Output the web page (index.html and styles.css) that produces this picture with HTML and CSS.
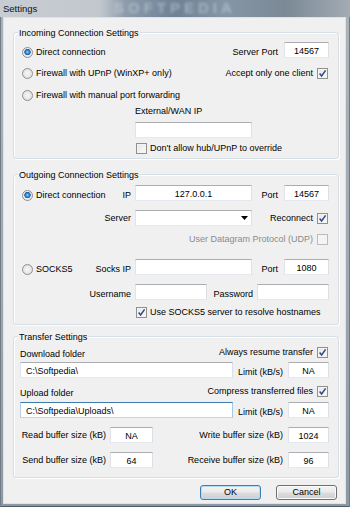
FILE: index.html
```html
<!DOCTYPE html>
<html>
<head>
<meta charset="utf-8">
<title>Settings</title>
<link rel="stylesheet" href="styles.css">
</head>
<body>
<div class="window">
  <div class="titlebar">
    <span class="title">Settings</span>
    <span class="watermark">SOFTPEDIA</span>
  </div>
  <div class="client">

    <section class="group g1">
      <span class="legend">Incoming Connection Settings</span>
      <div class="row h16 bottom">
        <span class="opt"><span class="rb on"></span>Direct connection</span>
        <span class="grow"></span>
        <span class="lbl">Server Port</span>
        <span class="in port">14567</span>
      </div>
      <div class="row h16 mt7">
        <span class="opt"><span class="rb"></span>Firewall with UPnP (WinXP+ only)</span>
        <span class="grow"></span>
        <span class="chk">Accept only one client<span class="cb"><svg width="9" height="9" viewBox="0 0 9 9"><path d="M1.6 4.6 L3.6 7 L7.6 1.4" fill="none" stroke="#33467f" stroke-width="1.5"/></svg></span></span>
      </div>
      <div class="row h16 mt6">
        <span class="opt"><span class="rb"></span>Firewall with manual port forwarding</span>
      </div>
      <div class="row h12 mt2 indent">External/WAN IP</div>
      <div class="row h16 mt5 indent"><span class="in wide"></span></div>
      <div class="row h11 mt5 indent">
        <span class="chk left"><span class="cb off"></span>Don't allow hub/UPnP to override</span>
      </div>
    </section>

    <section class="group g2">
      <span class="legend">Outgoing Connection Settings</span>
      <div class="grow4 h16 bottom">
        <span class="c1"><span class="opt"><span class="rb on"></span>Direct connection</span><span>IP</span></span>
        <span class="in">127.0.0.1</span>
        <span class="lbl r">Port</span>
        <span class="in">14567</span>
      </div>
      <div class="grow4 h16 mt9 mid">
        <span class="c1 end">Server</span>
        <span class="in select"><svg width="7" height="4" viewBox="0 0 7 4"><path d="M0 0 H7 L3.5 4 Z" fill="#000"/></svg></span>
        <span class="span34 chk">Reconnect<span class="cb"><svg width="9" height="9" viewBox="0 0 9 9"><path d="M1.6 4.6 L3.6 7 L7.6 1.4" fill="none" stroke="#33467f" stroke-width="1.5"/></svg></span></span>
      </div>
      <div class="grow4 h11 mt8">
        <span class="spanall chk disabled">User Datagram Protocol (UDP)<span class="cb dis"></span></span>
      </div>
      <div class="grow4 h16 mt14 bottom">
        <span class="c1"><span class="opt"><span class="rb"></span>SOCKS5</span><span>Socks IP</span></span>
        <span class="in"></span>
        <span class="lbl r">Port</span>
        <span class="in">1080</span>
      </div>
      <div class="grow4 h16 mt9 bottom">
        <span class="c1 end">Username</span>
        <span class="span24 userrow">
          <span class="in half"></span>
          <span class="grow"></span>
          <span class="lbl">Password</span>
          <span class="in half"></span>
        </span>
      </div>
      <div class="grow4 h11 mt7">
        <span class="span24 chk left"><span class="cb"><svg width="9" height="9" viewBox="0 0 9 9"><path d="M1.6 4.6 L3.6 7 L7.6 1.4" fill="none" stroke="#33467f" stroke-width="1.5"/></svg></span>Use SOCKS5 server to resolve hostnames</span>
      </div>
    </section>

    <section class="group g3">
      <span class="legend">Transfer Settings</span>
      <div class="row h13 split">
        <span class="flabel">Download folder</span>
        <span class="chk top">Always resume transfer<span class="cb"><svg width="9" height="9" viewBox="0 0 9 9"><path d="M1.6 4.6 L3.6 7 L7.6 1.4" fill="none" stroke="#33467f" stroke-width="1.5"/></svg></span></span>
      </div>
      <div class="row h16 mt2 bottom">
        <span class="in path">C:\Softpedia\</span>
        <span class="grow"></span>
        <span class="lbl">Limit (kB/s)</span>
        <span class="in na">NA</span>
      </div>
      <div class="row h13 mt8 split">
        <span class="flabel">Upload folder</span>
        <span class="chk top">Compress transferred files<span class="cb"><svg width="9" height="9" viewBox="0 0 9 9"><path d="M1.6 4.6 L3.6 7 L7.6 1.4" fill="none" stroke="#33467f" stroke-width="1.5"/></svg></span></span>
      </div>
      <div class="row h16 mt3 bottom">
        <span class="in path focus">C:\Softpedia\Uploads\</span>
        <span class="grow"></span>
        <span class="lbl">Limit (kB/s)</span>
        <span class="in na">NA</span>
      </div>
      <div class="row h16 mt9 mid">
        <span class="blabel">Read buffer size (kB)</span>
        <span class="in buf">NA</span>
        <span class="grow"></span>
        <span class="lbl">Write buffer size (kB)</span>
        <span class="in na">1024</span>
      </div>
      <div class="row h16 mt9 mid">
        <span class="blabel">Send buffer size (kB)</span>
        <span class="in buf">64</span>
        <span class="grow"></span>
        <span class="lbl">Receive buffer size (kB)</span>
        <span class="in na">96</span>
      </div>
    </section>

    <div class="buttons">
      <span class="btn default">OK</span>
      <span class="btn">Cancel</span>
    </div>
  </div>
</div>
</body>
</html>
```

FILE: styles.css
```css
* { box-sizing: border-box; }
html, body { margin: 0; padding: 0; }
body {
  font-family: "Liberation Sans", Arial, sans-serif;
  font-size: 9px;
  color: #000;
  background: #8a96a1;
}

.window {
  width: 350px;
  height: 507px;
  display: flex;
  flex-direction: column;
  background: linear-gradient(180deg, #a9b3bc 0, #9ca7b1 60%, #8c98a3 100%);
  box-shadow: inset 1px 0 0 #6f7d89, inset -1px 0 0 #6f7d89, inset 0 -1px 0 #4f5b66;
  overflow: hidden;
}

.titlebar {
  position: relative;
  flex: none;
  height: 17px;
  display: flex;
  align-items: center;
  padding-left: 3px;
  background: linear-gradient(90deg, #c7cdd3 0, #c1c7cd 100px, #8d9cab 125px, #6e8195 175px, #8596a6 225px, #7b8996 285px, #a3abb3 350px);
  overflow: hidden;
}
.title {
  position: relative;
  z-index: 1;
  font-size: 9.5px;
  color: #111;
}
.watermark {
  position: absolute;
  left: 114px;
  top: 0;
  font-size: 15px;
  line-height: 16px;
  font-weight: bold;
  letter-spacing: 4px;
  color: rgba(215, 224, 233, 0.45);
  filter: blur(1.4px);
}

.client {
  flex: 1;
  margin: 0 4px 3px 3px;
  border: 1px solid #dde2e6;
  background: #f0f0f0;
  padding: 14px 0 0 9px;
}

.group {
  position: relative;
  width: 326px;
  border: 1px solid #d5dfe5;
  border-radius: 3px;
  box-shadow: inset 1px 1px 0 #fff, 1px 1px 0 #fff;
  padding: 0 9px 0 6px;
}
.legend {
  position: absolute;
  top: -5px;
  left: 4px;
  padding: 0 1px;
  line-height: 11px;
  background: #f0f0f0;
}
.g1 { padding-top: 9px; padding-bottom: 4px; }
.g2 { margin-top: 15px; padding-top: 10px; padding-bottom: 6px; }
.g3 { margin-top: 11px; padding-top: 10px; padding-bottom: 9px; }

.row { display: flex; align-items: center; }
.grow4 {
  display: grid;
  grid-template-columns: 111px 117px 24px 45px;
  column-gap: 4px;
  align-items: center;
}
.bottom { align-items: end; }
.row.bottom { align-items: flex-end; }
.mid { align-items: center; }

.h11 { height: 11px; }
.h12 { height: 12px; }
.h13 { height: 13px; }
.h16 { height: 16px; }
.mt2 { margin-top: 2px; }
.mt3 { margin-top: 3px; }
.mt5 { margin-top: 5px; }
.mt6 { margin-top: 6px; }
.mt7 { margin-top: 7px; }
.mt8 { margin-top: 8px; }
.mt9 { margin-top: 9px; }
.mt14 { margin-top: 14px; }
.indent { padding-left: 115px; }
.grow { flex: 1; }

.lbl { line-height: 11px; margin-right: 5px; }
.lbl.r { text-align: right; margin-right: 2px; }
.g1 .lbl { margin-right: 6px; }

.c1 { display: flex; justify-content: space-between; align-items: flex-end; line-height: 11px; }
.c1.end { justify-content: flex-end; }
.span34 { grid-column: 3 / 5; }
.span24 { grid-column: 2 / 5; }
.spanall { grid-column: 1 / 5; }
.userrow { display: flex; align-items: flex-end; height: 16px; }
.userrow .lbl { margin-right: 4px; }

.opt { display: flex; align-items: center; line-height: 11px; }
.rb {
  width: 11px;
  height: 11px;
  margin: 0 3px 0 2px;
  border-radius: 50%;
  border: 1px solid #8d8f91;
  background: radial-gradient(circle at 50% 50%, #f7f7f7 0, #e6e6e6 60%, #d2d4d6 100%);
}
.rb.on {
  background: radial-gradient(circle at 50% 45%, #a6dcf8 0, #3a94dc 1.4px, #1c5e9e 2.9px, #eef0f2 3.5px, #dcdee0 100%);
}

.chk { display: flex; align-items: center; justify-content: flex-end; line-height: 11px; }
.chk.left { justify-content: flex-start; }
.chk.left .cb { margin: 0 3px 0 1px; }
.chk.top { align-self: flex-start; }
.chk.disabled { color: #8b8b8b; }
.cb {
  width: 11px;
  height: 11px;
  margin: 0 1px 0 4px;
  border: 1px solid #8f9092;
  background: linear-gradient(135deg, #e4e6ea 0, #fbfbfb 100%);
  box-shadow: inset 0 0 0 1px #f4f4f4;
  display: flex;
  align-items: center;
  justify-content: center;
}
.cb.dis { border-color: #bcbcbc; background: #f4f4f4; }

.in {
  height: 16px;
  background: #fff;
  border: 1px solid;
  border-color: #abadb3 #dbdfe6 #e3e9ef #e2e3ea;
  line-height: 14px;
  padding-top: 1px;
  text-align: center;
  white-space: nowrap;
}
.port { width: 45px; }
.wide { width: 117px; }
.half { width: 72px; }
.path { width: 213px; text-align: left; padding-left: 5px; }
.na { width: 41px; }
.buf { width: 43px; }
.focus { border-color: #3d7bad #a4c9e3 #b7d9ed #b5cfe7; }
.select {
  display: flex;
  justify-content: flex-end;
  align-items: center;
  padding: 0 3px 0 0;
}

.split { justify-content: space-between; align-items: flex-end; }
.flabel { line-height: 11px; }
.blabel { width: 86px; text-align: right; margin-right: 4px; line-height: 11px; }

.buttons {
  width: 326px;
  display: flex;
  justify-content: flex-end;
  gap: 15px;
  padding-right: 2px;
  margin-top: 7px;
}
.btn {
  width: 61px;
  height: 15px;
  border: 1px solid #707070;
  border-radius: 3px;
  background: linear-gradient(180deg, #f3f3f3 0, #ebebeb 48%, #dddddd 52%, #cfcfcf 100%);
  box-shadow: inset 0 0 0 1px #fbfbfb;
  text-align: center;
  line-height: 13px;
}
.btn.default {
  border-color: #3c7fb1;
  box-shadow: inset 0 0 0 1px #b4dcf3;
}
```
